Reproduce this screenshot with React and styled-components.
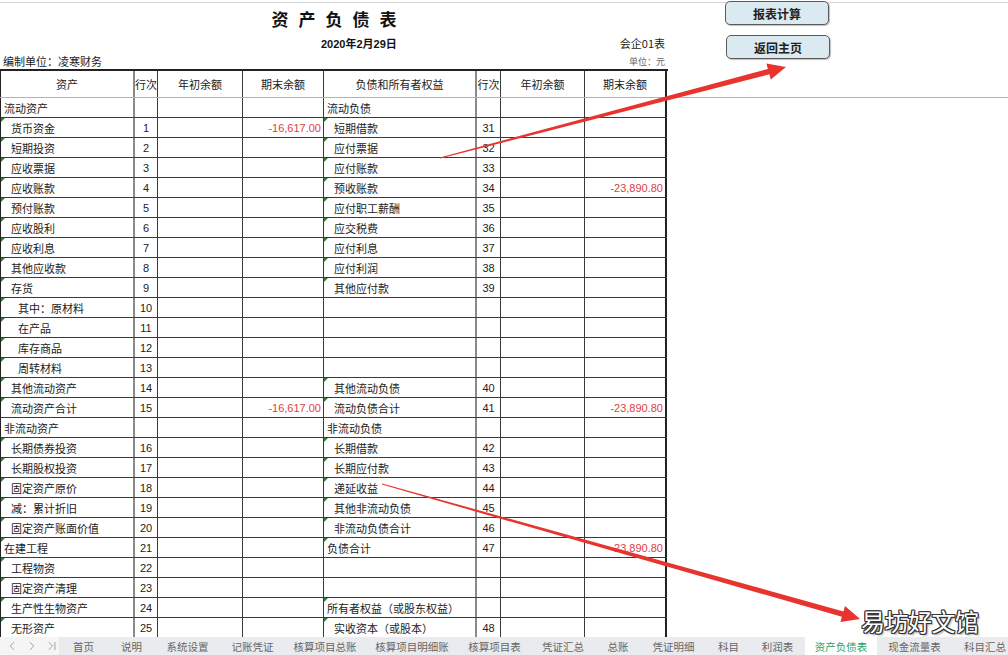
import React from 'react';
import styled, { createGlobalStyle } from 'styled-components';
import { ChevronLeft, ChevronRight, ChevronLast } from 'lucide-react';

const GlobalStyle = createGlobalStyle`
    html, body {
        margin: 0;
        padding: 0;
        background: #fff;
    }
    body {
        font-family: 'Noto Sans CJK SC', 'Liberation Sans', sans-serif;
        color: #222;
    }
`;

const COLS = '134px 23px 85px 81px 153px 24px 84px 82px';

const Page = styled.div`
    position: relative;
    width: 1008px;
    height: 655px;
    display: flex;
    flex-direction: column;
    overflow: hidden;
`;

const TopPane = styled.div`
    height: 98px;
    box-sizing: border-box;
    border-bottom: 1px solid #88c4c0;
    display: flex;
    flex-direction: column;
    flex-shrink: 0;
`;

const GridStrip = styled.div`
    height: 2px;
    border-bottom: 1px solid #d6d6d6;
    flex-shrink: 0;
`;

const TopRow = styled.div`
    display: flex;
    flex: 1;
`;

const ReportHead = styled.div`
    width: 668px;
    display: flex;
    flex-direction: column;
`;

const Title = styled.div`
    height: 30px;
    display: flex;
    align-items: center;
    justify-content: center;
    padding-left: 10px;
    font-size: 17px;
    font-weight: 700;
    letter-spacing: 10px;
    color: #111;
`;

const DateRow = styled.div`
    height: 20px;
    display: flex;
    align-items: center;
    font-size: 11px;
`;

const DateText = styled.span`
    margin-left: 321px;
    font-weight: 700;
    font-family: 'Liberation Sans', 'Noto Sans CJK SC', sans-serif;
    color: #111;
`;

const FormCode = styled.span`
    margin-left: auto;
    margin-right: 3px;
    color: #222;
`;

const InfoRow = styled.div`
    height: 16px;
    display: flex;
    align-items: center;
    padding: 0 3px;
`;

const Unit = styled.span`
    font-size: ${({ $small }) => ($small ? '9px' : '11px')};
    color: ${({ $small }) => ($small ? '#666' : '#222')};
    margin-left: ${({ $small }) => ($small ? 'auto' : '0')};
`;

const ButtonColumn = styled.div`
    margin-left: 57px;
    margin-top: -2px;
    display: flex;
    flex-direction: column;
    gap: 10px;
`;

const SheetButton = styled.button`
    width: 104px;
    height: 24px;
    margin-left: ${({ $shift }) => $shift || 0}px;
    border: 1px solid #5a5a5a;
    border-radius: 5px;
    background: #dbe9f1;
    box-shadow: 1px 1px 1px rgba(0, 0, 0, 0.25);
    font-family: 'Noto Sans CJK SC', sans-serif;
    font-size: 12px;
    font-weight: 700;
    color: #222;
    padding: 0;
    cursor: pointer;
`;

const HeadRow = styled.div`
    display: grid;
    grid-template-columns: ${COLS};
    height: 28px;
    box-sizing: border-box;
    border-top: 2px solid #222;
    border-left: 1px solid #222;
`;

const HeadCell = styled.div`
    display: flex;
    align-items: center;
    justify-content: center;
    font-size: 11px;
    color: #222;
    border-right: ${({ $gray }) => ($gray ? '2px solid #8a8a8a' : '1px solid #3a3a3a')};
    &:last-child {
        border-right: 2px solid #222;
    }
`;

const BodyPane = styled.div`
    flex: 1;
    overflow: hidden;
`;

const Row = styled.div`
    display: grid;
    grid-template-columns: ${COLS};
    width: 667px;
    height: 20px;
    box-sizing: border-box;
    border-left: 1px solid #222;
    border-bottom: 1px solid #3a3a3a;
`;

const NameCell = styled.div`
    position: relative;
    display: flex;
    align-items: center;
    padding-left: ${({ $level }) => [3, 10, 17][$level]}px;
    font-size: 11px;
    color: #222;
    white-space: nowrap;
    overflow: hidden;
    border-right: ${({ $gray }) => ($gray ? '2px solid #8a8a8a' : '1px solid #3a3a3a')};

    &::before {
        content: '';
        display: ${({ $mark }) => ($mark ? 'block' : 'none')};
        position: absolute;
        left: 0;
        top: 0;
        border-top: 4px solid #2f7d32;
        border-right: 4px solid transparent;
    }
`;

const NumCell = styled.div`
    display: flex;
    align-items: center;
    justify-content: center;
    font-family: 'Liberation Sans', sans-serif;
    font-size: 11px;
    color: #222;
    border-right: 1px solid #3a3a3a;
`;

const AmountCell = styled.div`
    display: flex;
    align-items: center;
    justify-content: flex-end;
    padding-right: 2px;
    font-family: 'Liberation Sans', sans-serif;
    font-size: 11px;
    color: #e0403c;
    border-right: 1px solid #3a3a3a;
    &:last-child {
        border-right: 2px solid #222;
    }
`;

const TabBar = styled.div`
    height: 18px;
    flex-shrink: 0;
    display: flex;
    background: #e9ebee;
    font-size: 10.5px;
`;

const Nav = styled.div`
    width: 64px;
    display: flex;
    align-items: center;
    gap: 6px;
    padding-left: 5px;
    box-sizing: border-box;
    background: #f5f5f6;
    color: #8c8c8c;
`;

const Tab = styled.div`
    width: ${({ $w }) => $w}px;
    flex-shrink: 0;
    display: flex;
    align-items: center;
    justify-content: center;
    white-space: nowrap;
    background: ${({ $active }) => ($active ? '#fff' : 'transparent')};
    color: ${({ $active }) => ($active ? '#2aa267' : '#666')};
`;

const Overlay = styled.svg`
    position: absolute;
    left: 0;
    top: 0;
    pointer-events: none;
`;

const Watermark = styled.div`
    position: absolute;
    left: 861px;
    top: 606px;
    font-size: 24px;
    line-height: 30px;
    color: #fff;
    letter-spacing: -0.5px;
    text-shadow: 1px 0 0 #333, -1px 0 0 #333, 0 1px 0 #333, 0 -1px 0 #333,
        1px 1px 0 #333, -1px -1px 0 #333, 1px -1px 0 #333, -1px 1px 0 #333,
        2px 2px 2px rgba(0, 0, 0, 0.35);
`;

const sec = (name) => ({ name, level: 0 });
const item = (name, no, end, level = 1) => ({ name, no, end, level, mark: true });

const rows = [
    [sec('流动资产'), sec('流动负债')],
    [item('货币资金', 1, '-16,617.00'), item('短期借款', 31)],
    [item('短期投资', 2), item('应付票据', 32)],
    [item('应收票据', 3), item('应付账款', 33)],
    [item('应收账款', 4), item('预收账款', 34, '-23,890.80')],
    [item('预付账款', 5), item('应付职工薪酬', 35)],
    [item('应收股利', 6), item('应交税费', 36)],
    [item('应收利息', 7), item('应付利息', 37)],
    [item('其他应收款', 8), item('应付利润', 38)],
    [item('存货', 9), item('其他应付款', 39)],
    [item('其中：原材料', 10, '', 2), null],
    [item('在产品', 11, '', 2), null],
    [item('库存商品', 12, '', 2), null],
    [item('周转材料', 13, '', 2), null],
    [item('其他流动资产', 14), item('其他流动负债', 40)],
    [item('流动资产合计', 15, '-16,617.00'), item('流动负债合计', 41, '-23,890.80')],
    [sec('非流动资产'), sec('非流动负债')],
    [item('长期债券投资', 16), item('长期借款', 42)],
    [item('长期股权投资', 17), item('长期应付款', 43)],
    [item('固定资产原价', 18), item('递延收益', 44)],
    [item('减：累计折旧', 19), item('其他非流动负债', 45)],
    [item('固定资产账面价值', 20), item('非流动负债合计', 46)],
    [item('在建工程', 21, '', 0), item('负债合计', 47, '-23,890.80', 0)],
    [item('工程物资', 22), null],
    [item('固定资产清理', 23), null],
    [item('生产性生物资产', 24), { ...sec('所有者权益（或股东权益）'), mark: true }],
    [item('无形资产', 25), item('实收资本（或股本）', 48)]
];

const tabs = [
    ['首页', 49],
    ['说明', 47],
    ['系统设置', 65],
    ['记账凭证', 65],
    ['核算项目总账', 80],
    ['核算项目明细账', 94],
    ['核算项目表', 71],
    ['凭证汇总', 66],
    ['总账', 44],
    ['凭证明细', 67],
    ['科目', 43],
    ['利润表', 55],
    ['资产负债表', 72, true],
    ['现金流量表', 75],
    ['科目汇总', 66]
];

const headers = ['资产', '行次', '年初余额', '期末余额', '负债和所有者权益', '行次', '年初余额', '期末余额'];

const Side = ({ data }) => {
    const d = data || { name: '', level: 0 };
    return (
        <>
            <NameCell $level={d.level} $mark={d.mark} $gray>
                {d.name}
            </NameCell>
            <NumCell>{d.no ?? ''}</NumCell>
            <AmountCell />
            <AmountCell>{d.end || ''}</AmountCell>
        </>
    );
};

const Arrows = () => (
    <Overlay width='1008' height='655' viewBox='0 0 1008 655'>
        <polygon
            fill='#e8332f'
            points='440.1,158.6 769.3,74.3 770.8,79.6 786,67 766.4,63.6 767.9,68.9 439.9,157.4'
        />
        <polygon
            fill='#e8332f'
            points='381.9,484.6 841.9,616.8 840.4,622.1 860,619 845,606.1 843.5,611.4 382.1,483.4'
        />
    </Overlay>
);

const App = () => {
    return (
        <Page>
            <GlobalStyle />
            <TopPane>
                <GridStrip />
                <TopRow>
                    <ReportHead>
                        <Title>资产负债表</Title>
                        <DateRow>
                            <DateText>2020年2月29日</DateText>
                            <FormCode>会企01表</FormCode>
                        </DateRow>
                        <InfoRow>
                            <Unit>编制单位：凌寒财务</Unit>
                            <Unit $small>单位：元</Unit>
                        </InfoRow>
                        <HeadRow>
                            {headers.map((h, i) => (
                                <HeadCell key={i} $gray={i === 0 || i === 4}>
                                    {h}
                                </HeadCell>
                            ))}
                        </HeadRow>
                    </ReportHead>
                    <ButtonColumn>
                        <SheetButton>报表计算</SheetButton>
                        <SheetButton $shift={1}>返回主页</SheetButton>
                    </ButtonColumn>
                </TopRow>
            </TopPane>
            <BodyPane>
                {rows.map(([left, right], i) => (
                    <Row key={i}>
                        <Side data={left} />
                        <Side data={right} />
                    </Row>
                ))}
            </BodyPane>
            <TabBar>
                <Nav>
                    <ChevronLeft size={14} strokeWidth={1.4} />
                    <ChevronRight size={14} strokeWidth={1.4} />
                    <ChevronLast size={14} strokeWidth={1.4} />
                </Nav>
                {tabs.map(([label, w, active]) => (
                    <Tab key={label} $w={w} $active={active}>
                        {label}
                    </Tab>
                ))}
            </TabBar>
            <Arrows />
            <Watermark>易坊好文馆</Watermark>
        </Page>
    );
};

export default App;
